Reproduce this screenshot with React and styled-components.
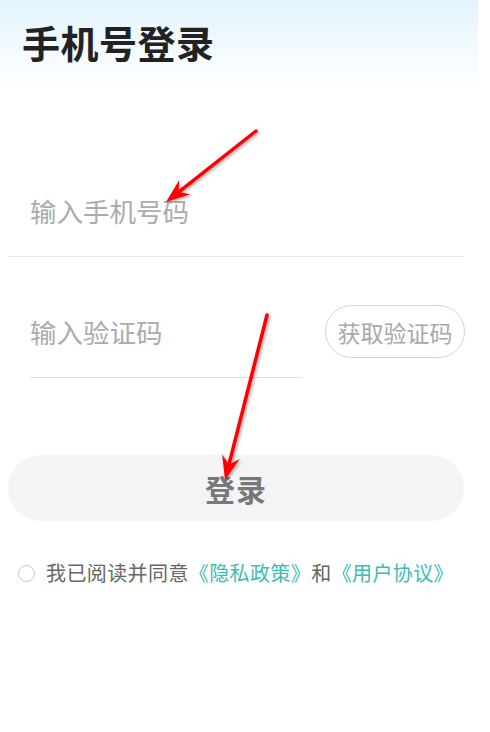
import React from "react"
import styled, { createGlobalStyle } from "styled-components"

const GlobalStyle = createGlobalStyle`
  html, body {
    margin: 0;
    padding: 0;
    background: #fff;
  }
  body {
    font-family: "Noto Sans CJK SC", "Noto Sans", sans-serif;
  }
  * {
    box-sizing: border-box;
  }
`

// annotation arrows drawn over the screenshot
const arrows = [
  { from: [256, 131], to: [166, 202] },
  { from: [267, 315], to: [225, 480] },
]

function arrowHead(from, to) {
  const dx = to[0] - from[0]
  const dy = to[1] - from[1]
  const len = Math.hypot(dx, dy)
  const ux = dx / len
  const uy = dy / len
  const px = -uy
  const py = ux
  const back = 24
  const notch = 16
  const half = 9
  const bx = to[0] - ux * back
  const by = to[1] - uy * back
  const nx = to[0] - ux * notch
  const ny = to[1] - uy * notch
  return [
    [to[0], to[1]],
    [bx + px * half, by + py * half],
    [nx, ny],
    [bx - px * half, by - py * half],
  ].map(p => p.join(",")).join(" ")
}

export default function App() {
  return (
    <Screen>
      <GlobalStyle />
      <Page>
        <Header>
          <Title>手机号登录</Title>
        </Header>

        <PhoneField>
          <Input placeholder="输入手机号码" />
        </PhoneField>

        <CodeRow>
          <CodeField>
            <Input placeholder="输入验证码" />
          </CodeField>
          <CodeButton type="button">获取验证码</CodeButton>
        </CodeRow>

        <LoginButton type="button">登录</LoginButton>

        <Agreement>
          <Radio />
          <span>我已阅读并同意</span>
          <Link>《隐私政策》</Link>
          <span>和</span>
          <Link>《用户协议》</Link>
        </Agreement>
      </Page>

      <Overlay width="490" height="732" viewBox="0 0 490 732">
        <defs>
          <filter id="shadow" x="-20%" y="-20%" width="140%" height="140%">
            <feDropShadow dx="1.5" dy="1.5" stdDeviation="1.5" floodColor="#000" floodOpacity="0.35" />
          </filter>
        </defs>
        {arrows.map((a, i) => (
          <g key={i} filter="url(#shadow)">
            <line
              x1={a.from[0]}
              y1={a.from[1]}
              x2={a.to[0] - (a.to[0] - a.from[0]) * 0.08}
              y2={a.to[1] - (a.to[1] - a.from[1]) * 0.08}
              stroke="#ff0000"
              strokeWidth="3.5"
              strokeLinecap="round"
            />
            <polygon points={arrowHead(a.from, a.to)} fill="#ff0000" />
          </g>
        ))}
      </Overlay>
    </Screen>
  )
}

const Screen = styled.div`
  position: relative;
  width: 490px;
  height: 732px;
  overflow: hidden;
  background: #fff;
`

const Page = styled.div`
  width: 478px;
  height: 100%;
  display: flex;
  flex-direction: column;
  background: #fff;
`

const Header = styled.div`
  height: 90px;
  padding: 18px 0 0 22px;
  background: linear-gradient(180deg, #e2f4fd 0%, #f3fafe 55%, #ffffff 100%);
`

const Title = styled.h1`
  margin: 0;
  font-size: 38px;
  line-height: 48px;
  font-weight: 700;
  color: #222;
  letter-spacing: 0.5px;
`

const Input = styled.input`
  width: 100%;
  border: none;
  outline: none;
  background: transparent;
  font-family: inherit;
  font-size: 26.5px;
  color: #333;
  padding: 0;

  &::placeholder {
    color: #ababab;
  }
`

const PhoneField = styled.div`
  margin: 86px 0 0 8px;
  width: 456px;
  height: 81px;
  padding: 0 0 12px 22px;
  display: flex;
  align-items: center;
  border-bottom: 1px solid #e6e6e6;
`

const CodeRow = styled.div`
  margin-top: 43px;
  padding-left: 30px;
  display: flex;
  align-items: flex-start;
  gap: 23px;
`

const CodeField = styled.div`
  width: 272px;
  height: 78px;
  padding-bottom: 14px;
  display: flex;
  align-items: center;
  border-bottom: 1px solid #e2e2e2;
`

const CodeButton = styled.button`
  margin-top: 5px;
  width: 140px;
  height: 53px;
  border: 1.5px solid #d4d4d4;
  border-radius: 27px;
  background: #fff;
  font-family: inherit;
  font-size: 23px;
  color: #a8a8a8;
  padding: 0;
`

const LoginButton = styled.button`
  margin: 77px 0 0 8px;
  width: 456px;
  height: 66px;
  border: none;
  border-radius: 33px;
  background: #f3f4f6;
  font-family: inherit;
  font-size: 30px;
  font-weight: 700;
  color: #787878;
  letter-spacing: 1px;
  padding: 0;
`

const Agreement = styled.div`
  margin-top: 40px;
  padding-left: 18px;
  display: flex;
  align-items: center;
  font-size: 20px;
  line-height: 24px;
  letter-spacing: 0.4px;
  color: #666;
`

const Radio = styled.span`
  width: 17px;
  height: 17px;
  margin-right: 11px;
  border: 1.5px solid #c8c8c8;
  border-radius: 50%;
`

const Link = styled.span`
  color: #3dbcb3;
`

const Overlay = styled.svg`
  position: absolute;
  left: 0;
  top: 0;
  pointer-events: none;
`
